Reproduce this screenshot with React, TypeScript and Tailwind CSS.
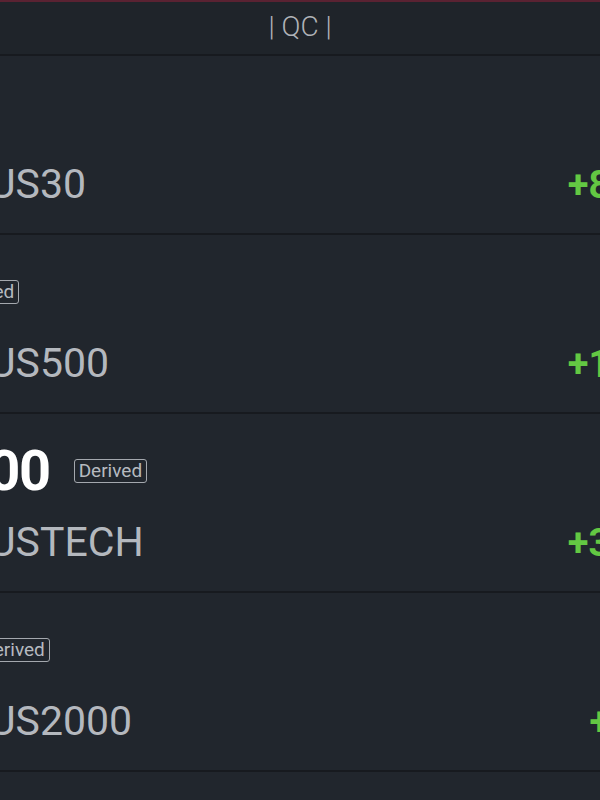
const rows = [
  { name: "US 30", symbol: "US30", change: "+8.52%" },
  { name: "US 500", symbol: "US500", change: "+1.23%" },
  { name: "US Tech 100", symbol: "USTECH", change: "+3.10%" },
  { name: "US 2000", symbol: "US2000", change: "+0.9%" },
  { name: "Germany 40", symbol: "DE40", change: "+0.41%" },
];

export default function App() {
  return (
    <div className="min-h-screen w-[600px] overflow-hidden bg-[#21262d] font-['Roboto',sans-serif]">
      <div className="h-[2px] bg-[#5a2232]" />
      <header className="flex h-[54px] items-center justify-center border-b-2 border-[#171a1f] bg-[#1f242a] pb-[3px] text-[28px] font-light text-[#b0b3b8]">
        | QC |
      </header>

      {rows.map((row) => (
        <div key={row.symbol} className="h-[179px] border-b-2 border-[#171a1f]">
          <div className="-ml-[251px] w-[944px] pt-[25px]">
            <div className="flex h-[64px] items-center gap-6">
              <span className="text-[56px] font-bold leading-[64px] tracking-[-1.5px] text-white">
                {row.name}
              </span>
              <span className="rounded-[3px] border-[1.5px] border-[#a4a8ae] px-[4px] text-[19px] leading-[22px] text-[#b6bac0]">
                Derived
              </span>
            </div>
            <div className="mt-[15px] flex items-baseline justify-between pl-[240px]">
              <span className="text-[41px] leading-[48px] text-[#b4b8be]">
                {row.symbol}
              </span>
              <span className="text-[38px] font-bold leading-[48px] text-[#63c843]">
                {row.change}
              </span>
            </div>
          </div>
        </div>
      ))}
    </div>
  );
}
